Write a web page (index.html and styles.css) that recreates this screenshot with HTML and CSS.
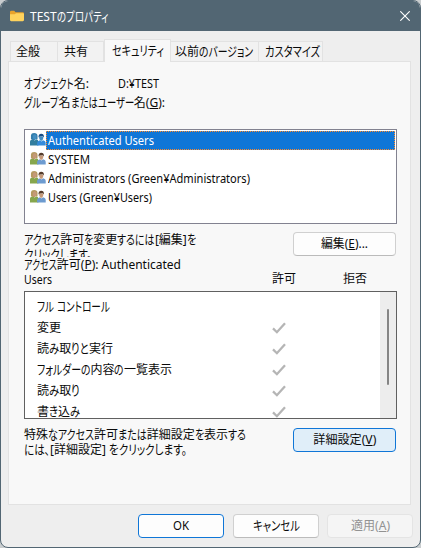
FILE: index.html
```html
<!DOCTYPE html>
<html lang="ja">
<head>
<meta charset="utf-8">
<title>TESTのプロパティ</title>
<link rel="stylesheet" href="styles.css">
</head>
<body>
<svg class="defs" aria-hidden="true">
  <symbol id="people" viewBox="0 0 17 15">
    <path class="body-a" d="M0 14V9.500Q0 7.500 3 7.200L5 8.500L7 7.200Q9 8 9 10V14Z"/>
    <path class="hair-a" d="M1 7V3.200Q1.300 .6 4.500 .6T8 3.500V7.200H6L5 8H3Z"/>
    <ellipse class="skin" cx="5" cy="4.800" rx="2" ry="2.900"/>
    <path class="body-b" d="M7.500 14V11Q8 9 10.500 8.300L12 9.500L14 8.300Q16.700 9 16.700 11V14Z"/>
    <path class="skin" d="M9.500 4.200H14.200Q14.300 8 12.800 8.900H11.200Q9.600 7.500 9.500 4.200Z"/>
    <path class="hair-b" d="M9 5.500Q8.800 1.300 12 1.300T14.800 5.500L13.700 4L10.200 4.200Z"/>
  </symbol>
  <symbol id="check" viewBox="0 0 14 12">
    <path d="M1 6.400L4.900 10.200L13 1.200" fill="none" stroke="#b5b5b5" stroke-width="2.300"/>
  </symbol>
</svg>
<div class="window">
  <header class="titlebar">
    <svg class="folder" viewBox="0 0 15 12"><path d="M0 2Q0 .5 1.300 .5H4.500L6 2H13.700Q15 2 15 3.300V5H0Z" fill="#e9a32b"/><path d="M0 4.200H5L6.500 3H14Q15 3 15 4V10.300Q15 11.500 13.800 11.500H1.200Q0 11.500 0 10.300Z" fill="#ffd35d"/></svg>
    <span data-w="78">TESTのプロパティ</span>
    <svg class="close" viewBox="0 0 10 10"><path d="M.3 .3L9.700 9.700M9.700 .3L.3 9.700" stroke="#fff" stroke-width="1.100"/></svg>
  </header>
  <nav class="tabs">
    <div class="tab general"><span>全般</span></div>
    <div class="tab share"><span>共有</span></div>
    <div class="tab active"><span data-w="52">セキュリティ</span></div>
    <div class="tab versions"><span data-w="78">以前のバージョン</span></div>
    <div class="tab custom"><span data-w="55">カスタマイズ</span></div>
  </nav>
  <main class="panel">
    <div class="object"><span class="object-label" data-w="65">オブジェクト名:</span><span data-w="41">D:¥TEST</span></div>
    <div class="group-label"><span data-w="141">グループ名またはユーザー名(<u>G</u>):</span></div>
    <div class="users">
      <div class="user selected"><svg><use href="#people"/></svg><div class="name"><span data-w="106">Authenticated Users</span></div></div>
      <div class="user"><svg><use href="#people"/></svg><div class="name"><span data-w="42">SYSTEM</span></div></div>
      <div class="user"><svg><use href="#people"/></svg><div class="name"><span data-w="202">Administrators (Green¥Administrators)</span></div></div>
      <div class="user"><svg><use href="#people"/></svg><div class="name"><span data-w="104">Users (Green¥Users)</span></div></div>
    </div>
    <div class="edit-row">
      <div class="hint"><div><span data-w="172">アクセス許可を変更するには[編集]を</span></div><div><span data-w="68">クリックします。</span></div></div>
      <button class="button"><span data-w="47">編集(<u>E</u>)...</span></button>
    </div>
    <div class="perm-head">
      <div><div><span data-w="157">アクセス許可(<u>P</u>): Authenticated</span></div><div><span data-w="28">Users</span></div></div>
      <span>許可</span><span>拒否</span>
    </div>
    <div class="perms">
      <div class="perm-list">
        <div class="perm"><span data-w="73">フル コントロール</span></div>
        <div class="perm"><span>変更</span><svg><use href="#check"/></svg></div>
        <div class="perm"><span data-w="76">読み取りと実行</span><svg><use href="#check"/></svg></div>
        <div class="perm"><span data-w="135">フォルダーの内容の一覧表示</span><svg><use href="#check"/></svg></div>
        <div class="perm"><span data-w="43">読み取り</span><svg><use href="#check"/></svg></div>
        <div class="perm"><span data-w="43">書き込み</span><svg><use href="#check"/></svg></div>
      </div>
      <div class="scrollbar"><div class="thumb"></div></div>
    </div>
    <div class="advanced-row">
      <div class="note"><div><span data-w="222">特殊なアクセス許可または詳細設定を表示する</span></div><div><span data-w="163">には、[詳細設定] をクリックします。</span></div></div>
      <button class="button hot"><span data-w="63">詳細設定(<u>V</u>)</span></button>
    </div>
  </main>
  <footer class="actions">
    <button class="button primary"><span data-w="16">OK</span></button>
    <button class="button"><span data-w="47">キャンセル</span></button>
    <button class="button disabled"><span data-w="39">適用(<u>A</u>)</span></button>
  </footer>
</div>
<script src="fit.js"></script>
</body>
</html>
```
FILE: styles.css
```css
* { box-sizing: border-box; }
body {
  margin: 0;
  width: 421px;
  height: 548px;
  overflow: hidden;
  background: #c9cdcf;
  color: #0a0a0a;
  font: 12px/15px "Noto Sans", "Noto Sans CJK JP", sans-serif;
  font-feature-settings: "palt";
}
.defs { display: none; }
svg { display: block; flex: none; }
span { white-space: pre; }
u { text-decoration: underline; text-underline-offset: 1px; text-decoration-thickness: 1px; }
.run { display: inline-block; transform-origin: 0 50%; }
.kana { font-size: 13px; line-height: 14px; }
.window {
  width: 421px;
  height: 548px;
  border: 1px solid #526673;
  border-radius: 8px;
  overflow: hidden;
  background: #eee;
}
.titlebar {
  height: 30px;
  display: flex;
  align-items: center;
  padding: 0 10px 0 9px;
  background: #526673;
  color: #fff;
}
.folder { width: 14px; height: 12px; margin-right: 6px; }
.close { width: 10px; height: 10px; margin-left: auto; }
.tabs {
  height: 30px;
  margin: 0 9px;
  display: flex;
  align-items: flex-end;
}
.tab {
  height: 20px;
  display: flex;
  align-items: center;
  border: 1px solid #e2e2e2;
  border-bottom: 0;
  border-left: 0;
  background: #f2f2f2;
}
.general { width: 48px; border-left: 1px solid #e2e2e2; padding-left: 5px; }
.share { width: 46px; padding-left: 6px; }
.active {
  position: relative;
  width: 67px;
  height: 23px;
  margin-bottom: -1px;
  padding: 0 0 2px 7px;
  border-left: 1px solid #e2e2e2;
  background: #f8f8f8;
}
.versions { width: 88px; padding-left: 4px; }
.custom { width: 64px; padding-left: 6px; }
.panel {
  width: 403px;
  height: 444px;
  margin-left: 7px;
  padding: 14px 13px 0 15px;
  border: 1px solid #e2e2e2;
  background: #f8f8f8;
}
.object { height: 19px; display: flex; }
.object-label { width: 94px; }
.group-label { height: 34px; }
.users {
  width: 373px;
  height: 95px;
  padding: 1px;
  border: 1px solid #828290;
  background: #fff;
}
.user {
  --hair-a: #b69a61;
  --body-a: #86a64d;
  --hair-b: #553c2b;
  --body-b: #6d9bd0;
  --skin: #c59979;
  height: 19px;
  display: flex;
  padding-left: 4px;
}
.user.selected {
  --hair-a: #347eac;
  --body-a: #337e9e;
  --hair-b: #164c86;
  --body-b: #358bda;
  --skin: #448fc2;
}
.user svg { width: 16px; height: 15px; margin-top: 1px; }
.name { flex: 1; height: 19px; padding: 2px 0 0 2px; }
.selected .name { padding: 1px 0 0 1px; border: 1px dotted #ff8a2a; background: #0f76d7; color: #fff; }
.hair-a { fill: var(--hair-a); }
.body-a { fill: var(--body-a); }
.hair-b { fill: var(--hair-b); }
.body-b { fill: var(--body-b); }
.skin { fill: var(--skin); }
.edit-row { height: 33px; display: flex; justify-content: space-between; align-items: flex-start; padding-top: 8px; }
.edit-row .hint { height: 25px; overflow: hidden; }
.button {
  width: 103px;
  height: 24px;
  display: flex;
  align-items: center;
  justify-content: center;
  padding: 0 0 1px;
  border: 1px solid #d0d0d0;
  border-bottom-color: #bbb;
  border-radius: 4px;
  background: #fdfdfd;
  color: #0a0a0a;
  font: inherit;
}
.edit-row .button, .advanced-row .button { margin-right: 1px; }
.perm-head {
  height: 34px;
  display: grid;
  grid-template-columns: 248px 71px 1fr;
}
.perm-head > span { padding-top: 14px; }
.perms {
  width: 373px;
  height: 128px;
  display: flex;
  border: 1px solid #606060;
  background: #fff;
  overflow: hidden;
}
.perm-list { flex: 1; padding: 4px 0 0 12px; }
.perm { height: 21px; display: grid; grid-template-columns: 235px 1fr; align-items: center; }
.perm svg { width: 14px; height: 12px; }
.scrollbar { width: 16px; padding: 17px 0 0 7px; background: #ededed; }
.thumb { width: 2px; height: 76px; border-radius: 1px; background: #858585; }
.advanced-row { display: flex; justify-content: space-between; padding-top: 8px; }
.advanced-row .button { margin-top: 1px; }
.note { width: 225px; }
.hot { border-color: #0f76d7; background: #e0eef9; }
.actions { display: flex; justify-content: flex-end; gap: 8px; padding: 9px 7px 0 0; }
.actions .button { width: 86px; }
.actions .primary { border-color: #0f76d7; margin-right: 1px; }
.actions .disabled { border-color: #e4e4e4; background: #f5f5f5; color: #929292; }
```
FILE: fit.js
```js
// Condenses the kana of each label to its column width; Latin-only labels are condensed whole.
const kana = /[\u3041-\u30ff、。]+/;
document.querySelectorAll('[data-w]').forEach(label => {
  const runs = [];
  if (kana.test(label.textContent)) {
    [...label.childNodes].filter(n => n.nodeType === 3).forEach(node => {
      const parts = node.data.split(/([\u3041-\u30ff、。]+)/).map(text => {
        if (!kana.test(text)) return document.createTextNode(text);
        const run = document.createElement('span');
        run.className = 'run kana';
        run.textContent = text;
        runs.push(run);
        return run;
      });
      node.replaceWith(...parts);
    });
  } else {
    const run = document.createElement('span');
    run.className = 'run';
    run.append(...label.childNodes);
    label.append(run);
    runs.push(run);
  }
  const range = document.createRange();
  range.selectNodeContents(label);
  const total = range.getBoundingClientRect().width;
  const widths = runs.map(r => r.getBoundingClientRect().width);
  const sum = widths.reduce((a, b) => a + b, 0);
  const scale = (sum + Number(label.dataset.w) - total) / sum;
  runs.forEach((run, i) => {
    run.style.width = widths[i] * scale + 'px';
    run.style.transform = `scaleX(${scale})`;
  });
});
```
